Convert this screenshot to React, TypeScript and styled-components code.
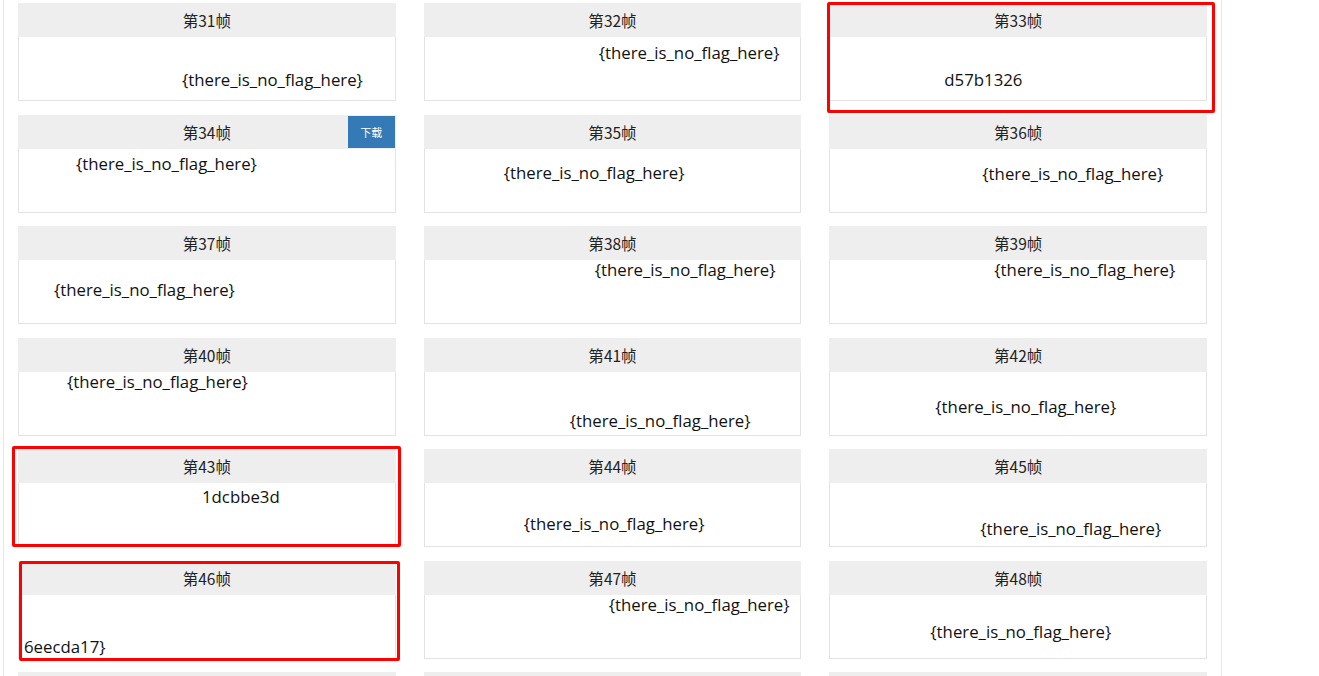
import React from "react";
import styled, { createGlobalStyle } from "styled-components";

type Frame = {
  no: number;
  text: string;
  x: number;
  y: number;
  download?: boolean;
  mark?: { l: number; t: number; w: number; h: number };
};

// x / y: where the text sits inside the frame picture
const frames: Frame[] = [
  { no: 31, text: "{there_is_no_flag_here}", x: 163, y: 33 },
  { no: 32, text: "{there_is_no_flag_here}", x: 174, y: 6 },
  { no: 33, text: "d57b1326", x: 114, y: 33, mark: { l: -3, t: -1, w: 388, h: 111 } },
  { no: 34, text: "{there_is_no_flag_here}", x: 57, y: 5, download: true },
  { no: 35, text: "{there_is_no_flag_here}", x: 79, y: 14 },
  { no: 36, text: "{there_is_no_flag_here}", x: 152, y: 15 },
  { no: 37, text: "{there_is_no_flag_here}", x: 35, y: 20 },
  { no: 38, text: "{there_is_no_flag_here}", x: 170, y: 0 },
  { no: 39, text: "{there_is_no_flag_here}", x: 164, y: 0 },
  { no: 40, text: "{there_is_no_flag_here}", x: 48, y: 0 },
  { no: 41, text: "{there_is_no_flag_here}", x: 145, y: 39 },
  { no: 42, text: "{there_is_no_flag_here}", x: 105, y: 25 },
  { no: 43, text: "1dcbbe3d", x: 183, y: 4, mark: { l: -7, t: -3, w: 389, h: 101 } },
  { no: 44, text: "{there_is_no_flag_here}", x: 99, y: 31 },
  { no: 45, text: "{there_is_no_flag_here}", x: 150, y: 36 },
  { no: 46, text: "6eecda17}", x: 5, y: 42, mark: { l: 0, t: 0, w: 381, h: 100 } },
  { no: 47, text: "{there_is_no_flag_here}", x: 184, y: 0 },
  { no: 48, text: "{there_is_no_flag_here}", x: 100, y: 27 },
  { no: 49, text: "", x: 0, y: 0 },
  { no: 50, text: "", x: 0, y: 0 },
  { no: 51, text: "", x: 0, y: 0 },
];

const GlobalStyle = createGlobalStyle`
  html, body {
    margin: 0;
    padding: 0;
    background: #ffffff;
    overflow: hidden;
  }
  body {
    font-family: "Noto Sans CJK SC", "Open Sans", sans-serif;
    color: #333;
  }
`;

export default function App() {
  return (
    <>
      <GlobalStyle />
      <Page>
        <Panel>
          <Grid>
            {frames.map((f) => (
              <Card key={f.no}>
                <Header>
                  <span>第{f.no}帧</span>
                  {f.download && <DownloadBtn>下载</DownloadBtn>}
                </Header>
                <Body $x={f.x} $y={f.y}>
                  {f.text}
                </Body>
                {f.mark && (
                  <Mark
                    style={{
                      left: f.mark.l,
                      top: f.mark.t,
                      width: f.mark.w,
                      height: f.mark.h,
                    }}
                  />
                )}
              </Card>
            ))}
          </Grid>
        </Panel>
      </Page>
    </>
  );
}

const Page = styled.div`
  height: 676px;
  padding-left: 3px;
  overflow: hidden;
`;

const Panel = styled.div`
  box-sizing: border-box;
  width: 1219px;
  min-height: 676px;
  border-left: 1px solid #e6e6e6;
  border-right: 1px solid #e6e6e6;
  padding: 3px 14px 0 14px;
`;

const Grid = styled.div`
  display: grid;
  grid-template-columns: repeat(3, 1fr);
  column-gap: 28px;
  row-gap: 13.5px;
`;

const Card = styled.div`
  position: relative;
  height: 98px;
  border: 1px solid #e3e3e3;
  border-top: none;
  box-sizing: border-box;
  display: flex;
  flex-direction: column;
  background: #fff;
`;

const Header = styled.div`
  position: relative;
  flex: 0 0 34px;
  margin: 0 -1px;
  background: #eeeeee;
  display: flex;
  align-items: center;
  justify-content: center;
  font-size: 15.5px;
  color: #222;
  font-family: "Noto Sans CJK SC", sans-serif;
`;

const DownloadBtn = styled.span`
  position: absolute;
  right: 1px;
  top: 1px;
  width: 47px;
  height: 32px;
  background: #337ab7;
  color: #fff;
  font-size: 11px;
  display: flex;
  align-items: center;
  justify-content: center;
`;

const Body = styled.div<{ $x: number; $y: number }>`
  flex: 1;
  padding-left: ${(p) => p.$x}px;
  padding-top: ${(p) => p.$y}px;
  white-space: nowrap;
  font-family: "Open Sans", sans-serif;
  font-size: 16.8px;
  line-height: 20px;
  color: #111;
`;

const Mark = styled.div`
  position: absolute;
  border: 3px solid #ff0000;
  border-radius: 2px;
  box-sizing: border-box;
  pointer-events: none;
`;
